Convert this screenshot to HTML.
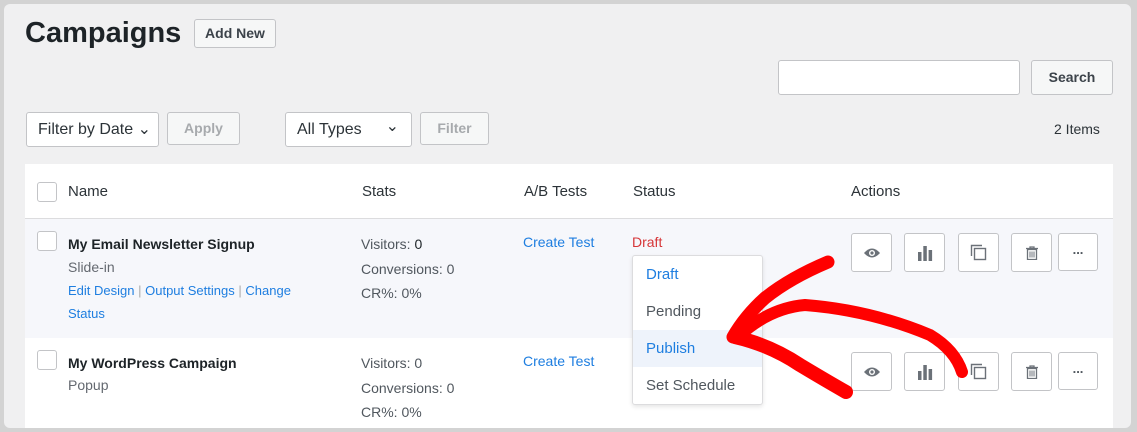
<!DOCTYPE html>
<html><head><style>
*{box-sizing:border-box;margin:0;padding:0}
body{width:1137px;height:432px;background:#d3d3d3;font-family:"Liberation Sans",sans-serif;position:relative;overflow:hidden;color:#2c3338}
.panel{position:absolute;left:4px;top:4px;width:1127px;height:424px;background:#f0f0f1;border-radius:6px}
.a{position:absolute}
.btn{position:absolute;border:1px solid #c3c4c7;border-radius:3px;background:#f6f7f7;font-size:14px;text-align:center}
.sel{position:absolute;border:1px solid #c3c4c7;border-radius:3px;background:#fff;font-size:16px;padding-left:11px;line-height:33px}
.chk{position:absolute;width:20px;height:20px;border:1px solid #c3c4c7;border-radius:3px;background:#fff}
.lnk{color:#1e7ee0}
.ib{position:absolute;width:41px;height:39px;border:1px solid #c3c4c7;border-radius:3px;background:#fff;display:flex;align-items:center;justify-content:center}
.dd div{height:37px;line-height:37px;padding-left:13px;font-size:15px;color:#50575e}
</style></head><body>
<div class="panel"></div>
<div class="a" style="left:25px;top:17px;font-size:29px;font-weight:bold;color:#1d2327">Campaigns</div>
<div class="btn" style="left:194px;top:19px;width:82px;height:29px;line-height:27px;font-weight:bold;color:#3c434a">Add New</div>
<div class="a" style="left:778px;top:60px;width:242px;height:35px;background:#fff;border:1px solid #c3c4c7;border-radius:3px"></div>
<div class="btn" style="left:1031px;top:60px;width:82px;height:35px;line-height:33px;font-weight:bold;color:#3c434a">Search</div>
<div class="sel" style="left:26px;top:112px;width:133px;height:35px">Filter by Date ⌄</div>
<div class="btn" style="left:167px;top:112px;width:73px;height:33px;line-height:31px;font-weight:bold;color:#a7aaad">Apply</div>
<div class="sel" style="left:285px;top:112px;width:127px;height:35px">All Types<span style="position:absolute;right:12px;top:-3px">⌄</span></div>
<div class="btn" style="left:420px;top:112px;width:69px;height:33px;line-height:31px;font-weight:bold;color:#a7aaad">Filter</div>
<div class="a" style="left:1054px;top:121px;font-size:14px">2 Items</div>
<div class="a" style="left:25px;top:164px;width:1088px;height:55px;background:#fff;border-bottom:1px solid #dcdcde"></div>
<div class="a" style="left:25px;top:219px;width:1088px;height:119px;background:#f6f7fb"></div>
<div class="a" style="left:25px;top:338px;width:1088px;height:90px;background:#fff"></div>
<div class="chk" style="left:37px;top:182px"></div>
<div class="a" style="left:68px;top:183px;font-size:15px">Name</div>
<div class="a" style="left:362px;top:183px;font-size:15px">Stats</div>
<div class="a" style="left:524px;top:183px;font-size:15px">A/B Tests</div>
<div class="a" style="left:633px;top:183px;font-size:15px">Status</div>
<div class="a" style="left:851px;top:183px;font-size:15px">Actions</div>
<div class="chk" style="left:37px;top:231px"></div>
<div class="a" style="left:68px;top:236px;font-size:14px;font-weight:bold;color:#1d2327">My Email Newsletter Signup</div>
<div class="a" style="left:68px;top:259px;font-size:14px;color:#646970">Slide-in</div>
<div class="a" style="left:68px;top:279px;font-size:13px;line-height:23px;width:240px"><span class="lnk">Edit Design</span> <span style="color:#aaa">|</span> <span class="lnk">Output Settings</span> <span style="color:#aaa">|</span> <span class="lnk">Change Status</span></div>
<div class="a" style="left:361px;top:232px;font-size:14px;line-height:24.5px;color:#50575e">Visitors: <b style="font-weight:normal;color:#1d2327">0</b><br>Conversions: 0<br>CR%: 0%</div>
<div class="a lnk" style="left:523px;top:234px;font-size:14px">Create Test</div>
<div class="a" style="left:632px;top:234px;font-size:14px;color:#d63638">Draft</div>
<div class="chk" style="left:37px;top:350px"></div>
<div class="a" style="left:68px;top:355px;font-size:14px;font-weight:bold;color:#1d2327">My WordPress Campaign</div>
<div class="a" style="left:68px;top:377px;font-size:14px;color:#646970">Popup</div>
<div class="a" style="left:361px;top:351px;font-size:14px;line-height:24.5px;color:#50575e">Visitors: 0<br>Conversions: 0<br>CR%: 0%</div>
<div class="a lnk" style="left:523px;top:353px;font-size:14px">Create Test</div>
<div class="a dd" style="left:632px;top:255px;width:131px;height:150px;background:#fff;border:1px solid #dcdcde;border-radius:3px;box-shadow:0 2px 4px rgba(0,0,0,.1);padding-top:0">
<div style="color:#1e7ee0">Draft</div><div>Pending</div><div style="color:#1e7ee0;background:#eef3fb">Publish</div><div>Set Schedule</div></div>
<div id="icons"></div>
<script>
var xs=[851,904,958,1011,1058],ys=[233,352];
var svg=['<svg width="18" height="12" viewBox="0 0 18 12"><path d="M1 6Q9-3 17 6Q9 15 1 6Z" fill="#6b7178"/><circle cx="9" cy="6" r="3" fill="#fff"/><circle cx="9" cy="6" r="1.6" fill="#6b7178"/></svg>',
'<svg width="16" height="16"><rect x="1" y="7" width="3.5" height="9" fill="#6b7178"/><rect x="6.3" y="1" width="3.5" height="15" fill="#6b7178"/><rect x="11.6" y="5" width="3.5" height="11" fill="#6b7178"/></svg>',
'<svg width="17" height="17"><path d="M1.5 12V1.5H12" fill="none" stroke="#6b7178" stroke-width="1.4"/><rect x="4.5" y="4.5" width="11" height="11" fill="none" stroke="#6b7178" stroke-width="1.4"/></svg>',
'<svg width="12" height="14"><path d="M0 2.5H12M4 2.5V1h4v1.5M1.5 3.5h9V13.5h-9Z" fill="none" stroke="#6b7178" stroke-width="1.3"/><path d="M4 5.5v6M6 5.5v6M8 5.5v6" stroke="#6b7178" stroke-width="1"/></svg>',
'<span style="font-size:13px;color:#50575e;font-weight:bold;position:relative;top:-3px">...</span>'];
var h='';ys.forEach(function(y){xs.forEach(function(x,i){h+='<div class="ib" style="left:'+x+'px;top:'+y+'px;'+(i==4?'width:40px;height:38px':'')+'">'+svg[i]+'</div>'})});
document.getElementById('icons').innerHTML=h;
</script>
<svg class="a" style="left:0;top:0" width="1137" height="432">
<g fill="none" stroke="#f00" stroke-linecap="round" stroke-linejoin="round">
<path d="M828 262Q790 278 765 298Q745 316 733 337" stroke-width="13"/>
<path d="M735 337Q770 345 800 365Q825 380 846 392" stroke-width="14"/>
<path d="M740 335Q770 308 805 305Q870 310 930 335Q955 350 962 372" stroke-width="12"/>
</g></svg>
</body></html>
